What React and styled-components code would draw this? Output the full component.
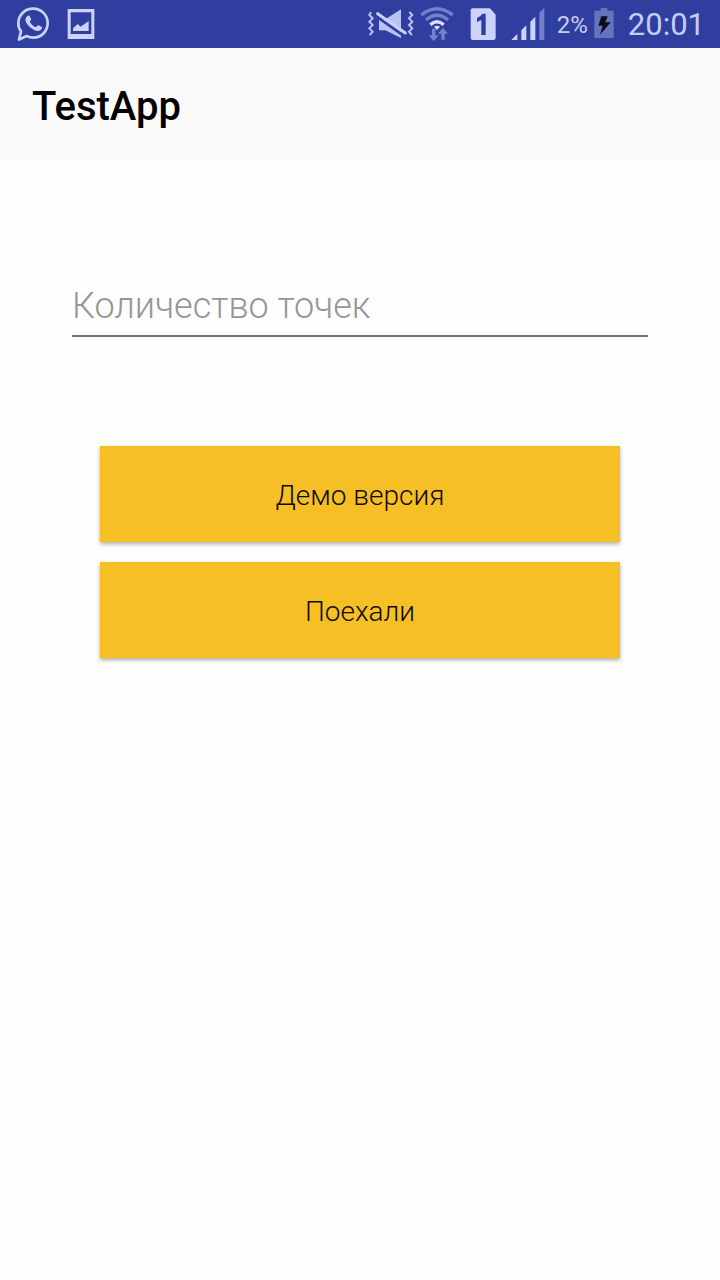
import React, { useState } from 'react';
import styled, { createGlobalStyle } from 'styled-components';

const GlobalStyle = createGlobalStyle`
  *, *::before, *::after { box-sizing: border-box; }
  body {
    margin: 0;
    background: #fefefe;
    font-family: Roboto, "Noto Sans", sans-serif;
  }
`;

const Screen = styled.div`
  display: flex;
  flex-direction: column;
  min-height: 100vh;
`;

const StatusBar = styled.div`
  display: flex;
  align-items: center;
  justify-content: space-between;
  height: 48px;
  padding: 0 15px 0 16px;
  background: #303f9f;
  color: #c5cdf7;
`;

const StatusGroup = styled.div`
  display: flex;
  align-items: center;
  gap: ${(p) => p.$gap}px;
`;

const Glyph = styled.svg`
  display: block;
  flex: none;
  height: 48px;
`;

const StatusText = styled.span`
  padding-top: 2px;
  font-size: ${(p) => p.$size}px;
  line-height: 48px;
  font-weight: 400;
`;

const AppBar = styled.header`
  display: flex;
  align-items: center;
  height: 112px;
  padding: 6px 32px 0;
  background: #fafafa;
`;

const Title = styled.h1`
  margin: 0;
  color: #000;
  font-size: 40px;
  line-height: 48px;
  font-weight: 500;
`;

const Form = styled.form`
  display: flex;
  flex-direction: column;
  padding: 112px 72px 0;
`;

const PointsInput = styled.input`
  width: 100%;
  height: 65px;
  padding: 4px 0 0;
  border: 0;
  border-bottom: 2px solid #737373;
  border-radius: 0;
  outline: none;
  background: transparent;
  color: #111;
  font-family: inherit;
  font-size: 36px;
  font-weight: 300;

  &::placeholder {
    color: #969696;
    opacity: 1;
  }
`;

const Actions = styled.div`
  display: flex;
  flex-direction: column;
  gap: 20px;
  padding: 109px 28px 0;
`;

const ActionButton = styled.button`
  height: 96px;
  padding: 2px 16px 0;
  border: 0;
  background: #f6bf26;
  box-shadow: 0 2px 4px rgba(0, 0, 0, 0.32);
  color: #120c00;
  font-family: inherit;
  font-size: 28px;
  font-weight: 300;
  cursor: pointer;
`;

const MessengerIcon = () => (
  <Glyph width="34" viewBox="48 0 102 144" fill="none" aria-hidden="true">
    <path
      d="M57 119 L63 94 C56 84 54 76 55 67 C57 43 76 26 99 26 C124 26 143 45 143 69 C143 94 124 113 99 113 C92 113 86 111 80 108 Z"
      stroke="#cbd3fb"
      strokeWidth="8"
      strokeLinejoin="round"
    />
    <path
      d="M84 47 C87 46 89 47 90 50 L93 57 C94 59 92 62 89 65 C94 73 100 79 108 82 C111 79 113 75 116 76 L124 80 C127 82 126 85 124 88 C120 93 114 94 108 92 C94 88 82 76 77 64 C75 57 78 50 84 47 Z"
      fill="#cbd3fb"
    />
  </Glyph>
);

const PictureIcon = () => (
  <Glyph width="28" viewBox="201 0 84 144" aria-hidden="true">
    <path
      fillRule="evenodd"
      d="M203 27 H283 V117 H203 Z M212 37 V102 H274 V37 Z"
      fill="#cbd3fb"
    />
    <path d="M219 93 V85 L233 72 L242 80 L266 63 V93 Z" fill="#cbd3fb" />
  </Glyph>
);

const MuteIcon = () => (
  <Glyph width="48" viewBox="21 0 144 144" fill="none" aria-hidden="true">
    <g stroke="#b9c3f2" strokeWidth="6">
      <path d="M33 36 L28 45 L38 55 L28 65 L38 75 L28 85 L38 95 L29 105" />
      <path d="M148 36 L157 45 L147 55 L157 65 L147 75 L157 85 L147 95 L156 105" />
    </g>
    <path d="M57 58 H76 L123 28 V114 L76 91 H57 Z" fill="#b9c3f2" />
    <path d="M49 49 L134 109" stroke="#303f9f" strokeWidth="8" />
    <path d="M53 41 L136 99" stroke="#cbd3fb" strokeWidth="9" strokeLinecap="round" />
  </Glyph>
);

const WifiIcon = () => (
  <Glyph width="36" viewBox="177 0 108 144" fill="none" aria-hidden="true">
    <g stroke="#7482c9" strokeWidth="10">
      <path d="M184 45 Q231 8 278 45" />
      <path d="M198 60 Q231 32 264 60" />
    </g>
    <path d="M211 74 Q231 56 251 74" stroke="#dce1ff" strokeWidth="10" />
    <path d="M222 80 Q231 74 240 80 L231 90 Z" fill="#dce1ff" />
    <path d="M216 86 H226 V106 H236 L221 124 L206 106 H216 Z" fill="#7482c9" />
    <path d="M249 83 L264 101 H254 V119 H244 V101 H234 Z" fill="#7482c9" />
  </Glyph>
);

const SimIcon = () => (
  <Glyph width="26" viewBox="46 0 78 144" aria-hidden="true">
    <path
      d="M54 25 H106 L123 44 V113 Q123 120 116 120 H55 Q48 120 48 113 V31 Q48 25 54 25 Z"
      fill="#cbd3fb"
    />
    <path d="M83 41 H93 V105 H80 V60 L67 66 V54 Q78 50 83 41 Z" fill="#303f9f" />
  </Glyph>
);

const SignalIcon = () => (
  <Glyph width="34" viewBox="167 0 102 144" aria-hidden="true">
    <g fill="#cbd3fb">
      <path d="M168 120 L186 102 V120 Z" />
      <path d="M198 120 V91 L213 76 V120 Z" />
      <path d="M225 120 V65 L240 50 V120 Z" />
    </g>
    <path d="M252 120 V38 L267 23 V120 Z" fill="#7180c7" />
  </Glyph>
);

const BatteryIcon = () => (
  <Glyph width="20" viewBox="132 0 60 144" aria-hidden="true">
    <path d="M133 32 H152 V24 H172 V32 H191 V114 H133 Z" fill="#6574bd" />
    <path d="M154 49 H173 L166 67 H182 L150 104 L158 77 H145 Z" fill="#0b0d18" />
  </Glyph>
);

export default function App() {
  const [points, setPoints] = useState('');

  return (
    <Screen>
      <GlobalStyle />
      <StatusBar>
        <StatusGroup $gap={17}>
          <MessengerIcon />
          <PictureIcon />
        </StatusGroup>
        <StatusGroup $gap={14}>
          <StatusGroup $gap={12}>
            <StatusGroup $gap={15}>
              <StatusGroup $gap={4}>
                <MuteIcon />
                <WifiIcon />
              </StatusGroup>
              <SimIcon />
              <SignalIcon />
            </StatusGroup>
            <StatusGroup $gap={6}>
              <StatusText $size={24}>2%</StatusText>
              <BatteryIcon />
            </StatusGroup>
          </StatusGroup>
          <StatusText $size={31}>20:01</StatusText>
        </StatusGroup>
      </StatusBar>
      <AppBar>
        <Title>TestApp</Title>
      </AppBar>
      <Form onSubmit={(e) => e.preventDefault()}>
        <PointsInput
          type="text"
          inputMode="numeric"
          aria-label="Количество точек"
          placeholder="Количество точек"
          value={points}
          onChange={(e) => setPoints(e.target.value)}
        />
        <Actions>
          <ActionButton type="button">Демо версия</ActionButton>
          <ActionButton type="submit">Поехали</ActionButton>
        </Actions>
      </Form>
    </Screen>
  );
}
